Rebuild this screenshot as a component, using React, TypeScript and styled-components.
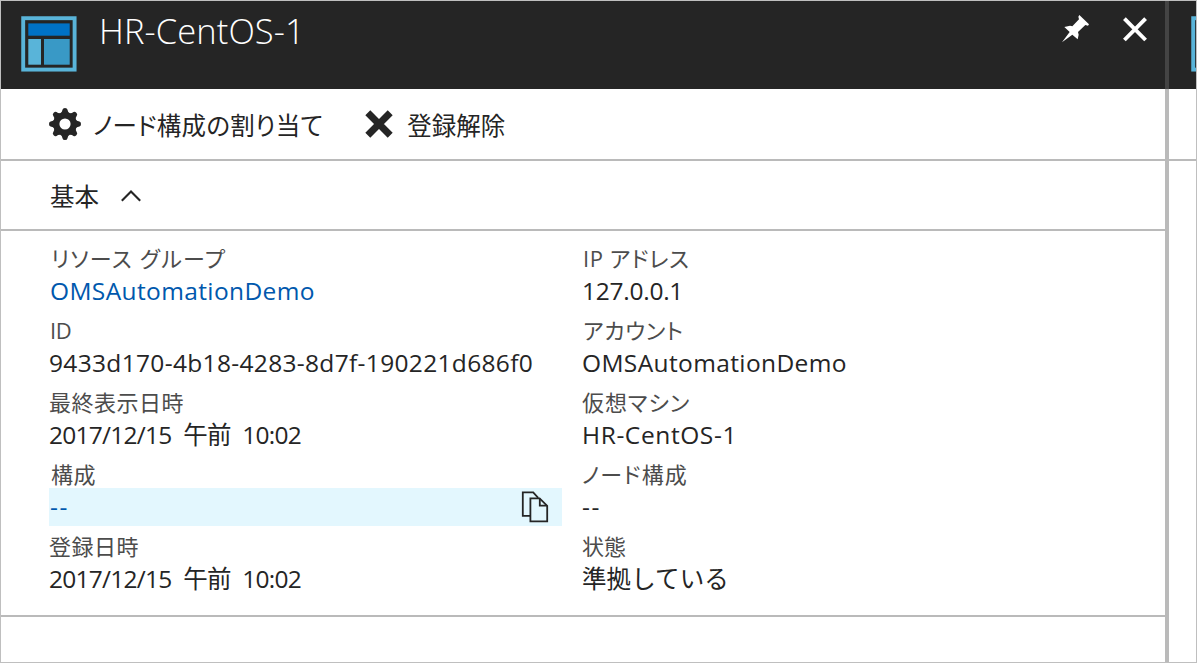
import React from "react";
import styled, { createGlobalStyle } from "styled-components";

const GlobalStyle = createGlobalStyle`
  * { box-sizing: border-box; }
  body {
    margin: 0;
    background: #fff;
    color: #252525;
    font-family: "Open Sans", "Noto Sans CJK JP", sans-serif;
  }
`;

const Frame = styled.div`
  display: flex;
  width: 1197px;
  height: 663px;
  border: 1px solid #bfbfbf;
  background: #fff;
  overflow: hidden;
`;

const Blade = styled.section`
  display: flex;
  flex-direction: column;
  width: 1164px;
  flex: none;
`;

const NextBlade = styled(Blade)`
  width: 27px;
  overflow: hidden;
`;

const Divider = styled.div`
  width: 4px;
  flex: none;
  background: linear-gradient(#444 88px, #bababa 88px);
`;

const Header = styled.header<{ $inset: number }>`
  display: flex;
  align-items: flex-start;
  height: 88px;
  flex: none;
  padding: 15px 17px 0 ${(p) => p.$inset}px;
  background: #252525;
  color: #fff;
`;

const Title = styled.h1`
  flex: 1;
  margin: -10px 0 0 22px;
  font-size: 34.5px;
  line-height: 50px;
  font-weight: 300;
  letter-spacing: 0.1px;
  white-space: nowrap;
`;

const HeaderActions = styled.div`
  display: flex;
  gap: 33px;
  margin-top: -1px;
`;

const IconButton = styled.button`
  display: flex;
  padding: 0;
  border: 0;
  background: none;
  color: inherit;
`;

const Toolbar = styled.div`
  display: flex;
  align-items: center;
  gap: 42px;
  height: 72px;
  flex: none;
  padding: 0 0 0 48px;
  border-bottom: 2px solid #bababa;
`;

const Command = styled.button<{ $track: number; $gap: number }>`
  display: flex;
  align-items: center;
  gap: ${(p) => p.$gap}px;
  padding: 0;
  border: 0;
  background: none;
  color: #252525;
  font-family: inherit;
  font-size: 24.5px;
  line-height: 32px;
  letter-spacing: ${(p) => p.$track}px;
  font-feature-settings: "palt";
  white-space: nowrap;
`;

const CommandText = styled.span`
  padding-top: 3px;
`;

const SectionBar = styled.div`
  display: flex;
  align-items: center;
  gap: 22px;
  height: 70px;
  flex: none;
  padding: 2px 0 0 49px;
  border-bottom: 2px solid #bababa;
  font-size: 24.5px;
`;

const SectionTitle = styled.span`
  padding-bottom: 2px;
`;

const Essentials = styled.div`
  display: grid;
  grid-template-columns: 513px 513px;
  column-gap: 20px;
  height: 386px;
  flex: none;
  padding: 7px 0 0 48px;
  border-bottom: 2px solid #bababa;
`;

const Column = styled.dl`
  margin: 0;
`;

const Label = styled.dt<{ $track: number; $inset: number }>`
  height: 34px;
  padding: 7px 0 0 ${(p) => p.$inset}px;
  color: #4c4c4c;
  font-size: 22px;
  line-height: 26px;
  letter-spacing: ${(p) => p.$track}px;
  font-feature-settings: "palt";
  white-space: nowrap;
`;

const Value = styled.dd<{ $track: number; $wordGap: number; $link?: boolean; $active?: boolean }>`
  display: flex;
  align-items: center;
  justify-content: space-between;
  height: 38px;
  margin: 0;
  padding: 0 13px 0 ${(p) => (p.$link ? 1 : 0)}px;
  background: ${(p) => (p.$active ? "#e3f7fe" : "transparent")};
  color: ${(p) => (p.$link ? "#0058ad" : "#252525")};
  font-size: 24.5px;
  line-height: 38px;
  letter-spacing: ${(p) => p.$track}px;
  word-spacing: ${(p) => p.$wordGap}px;
  white-space: nowrap;
`;

const ResourceIcon = () => (
  <svg width="56" height="56" viewBox="0 0 56 56" style={{ flex: "none" }}>
    <rect x="2.2" y="2.2" width="51.4" height="51.4" fill="none" stroke="#59b4d9" strokeWidth="3.9" />
    <rect x="7.3" y="7.4" width="41.4" height="12.3" fill="#0072c6" />
    <rect x="7.3" y="23" width="12.7" height="25.7" fill="#59b4d9" />
    <rect x="23" y="23" width="25.7" height="25.7" fill="#3999c6" />
  </svg>
);

const PinIcon = () => (
  <svg width="28" height="28" viewBox="0 0 84 84" fill="currentColor">
    <path d="M55 0 84 28 81 32 73 30 51 51 53 59 50 73 34 59 3 82 26 51 10 36 27 32 34 34 54 13 52 5Z" />
  </svg>
);

const CloseIcon = () => (
  <svg width="26" height="28" viewBox="0 0 26 28" fill="none" stroke="currentColor" strokeWidth="3.9">
    <path d="M2.4 3.6 23.6 25M23.6 3.6 2.4 25" />
  </svg>
);

const GearIcon = () => (
  <svg width="32" height="32" viewBox="-16 -16 32 32" fill="currentColor">
    <circle r="8.7" fill="none" stroke="currentColor" strokeWidth="6.2" />
    {[0, 45, 90, 135, 180, 225, 270, 315].map((angle) => (
      <path
        key={angle}
        d="M-5-10.5Q-2.8-11.5-2.4-14.4Q-2.2-16 0-16Q2.2-16 2.4-14.4Q2.8-11.5 5-10.5Z"
        transform={`rotate(${angle})`}
      />
    ))}
  </svg>
);

const CrossIcon = () => (
  <svg width="28" height="28" viewBox="0 0 28 28" fill="none" stroke="currentColor" strokeWidth="7">
    <path d="M2.8 2.8 25.2 25.2M25.2 2.8 2.8 25.2" />
  </svg>
);

const ChevronIcon = () => (
  <svg width="20" height="12" viewBox="0 0 20 12" fill="none" stroke="currentColor" strokeWidth="2.1">
    <path d="M.8 10.8 10 1.6 19.2 10.8" />
  </svg>
);

const CopyIcon = () => (
  <svg width="28" height="32" viewBox="0 0 28 32" fill="none" stroke="#252525" strokeWidth="1.8">
    <path d="M9 24.8H1.8V1.4H12.2L17.2 6.8" />
    <path d="M9.4 7.4H18.6L26.2 14.8V30.4H9.4Z" />
    <path d="M18.8 7.4V14.6H26" />
  </svg>
);

interface Field {
  label: string;
  value: string;
  labelTrack?: number;
  labelInset?: number;
  track?: number;
  wordGap?: number;
  link?: boolean;
  active?: boolean;
}

const leftFields: Field[] = [
  { label: "リソース グループ", labelTrack: 1.35, labelInset: 2, value: "OMSAutomationDemo", track: 0.38, link: true },
  { label: "ID", labelTrack: -0.5, labelInset: 1, value: "9433d170-4b18-4283-8d7f-190221d686f0", track: 0.33 },
  { label: "最終表示日時", labelTrack: 0.5, value: "2017/12/15 午前 10:02", track: -0.75, wordGap: 6 },
  { label: "構成", labelTrack: 0.4, labelInset: 2, value: "--", track: 1.5, link: true, active: true },
  { label: "登録日時", labelTrack: 0.5, value: "2017/12/15 午前 10:02", track: -0.75, wordGap: 6 },
];

const rightFields: Field[] = [
  { label: "IP アドレス", labelTrack: 0.6, labelInset: 1, value: "127.0.0.1", track: -0.25 },
  { label: "アカウント", labelTrack: 0.7, labelInset: 1, value: "OMSAutomationDemo", track: 0.38 },
  { label: "仮想マシン", labelTrack: 0.9, value: "HR-CentOS-1", track: 0.6 },
  { label: "ノード構成", labelTrack: 1.1, value: "--", track: 1.5 },
  { label: "状態", value: "準拠している", track: 0.1 },
];

const Fields = ({ items }: { items: Field[] }) => (
  <Column>
    {items.map((f) => (
      <React.Fragment key={f.label}>
        <Label $track={f.labelTrack ?? 0} $inset={f.labelInset ?? 0}>
          {f.label}
        </Label>
        <Value $track={f.track ?? 0} $wordGap={f.wordGap ?? 0} $link={f.link} $active={f.active}>
          {f.value}
          {f.active && <CopyIcon />}
        </Value>
      </React.Fragment>
    ))}
  </Column>
);

export default function App() {
  return (
    <>
      <GlobalStyle />
      <Frame>
        <Blade>
          <Header $inset={20}>
            <ResourceIcon />
            <Title>HR-CentOS-1</Title>
            <HeaderActions>
              <IconButton aria-label="Pin"><PinIcon /></IconButton>
              <IconButton aria-label="Close"><CloseIcon /></IconButton>
            </HeaderActions>
          </Header>
          <Toolbar>
            <Command $track={0.3} $gap={12}>
              <GearIcon />
              <CommandText>ノード構成の割り当て</CommandText>
            </Command>
            <Command $track={0} $gap={14}>
              <CrossIcon />
              <CommandText>登録解除</CommandText>
            </Command>
          </Toolbar>
          <SectionBar>
            <SectionTitle>基本</SectionTitle>
            <ChevronIcon />
          </SectionBar>
          <Essentials>
            <Fields items={leftFields} />
            <Fields items={rightFields} />
          </Essentials>
        </Blade>
        <Divider />
        <NextBlade>
          <Header $inset={22}>
            <ResourceIcon />
          </Header>
          <Toolbar />
        </NextBlade>
      </Frame>
    </>
  );
}
